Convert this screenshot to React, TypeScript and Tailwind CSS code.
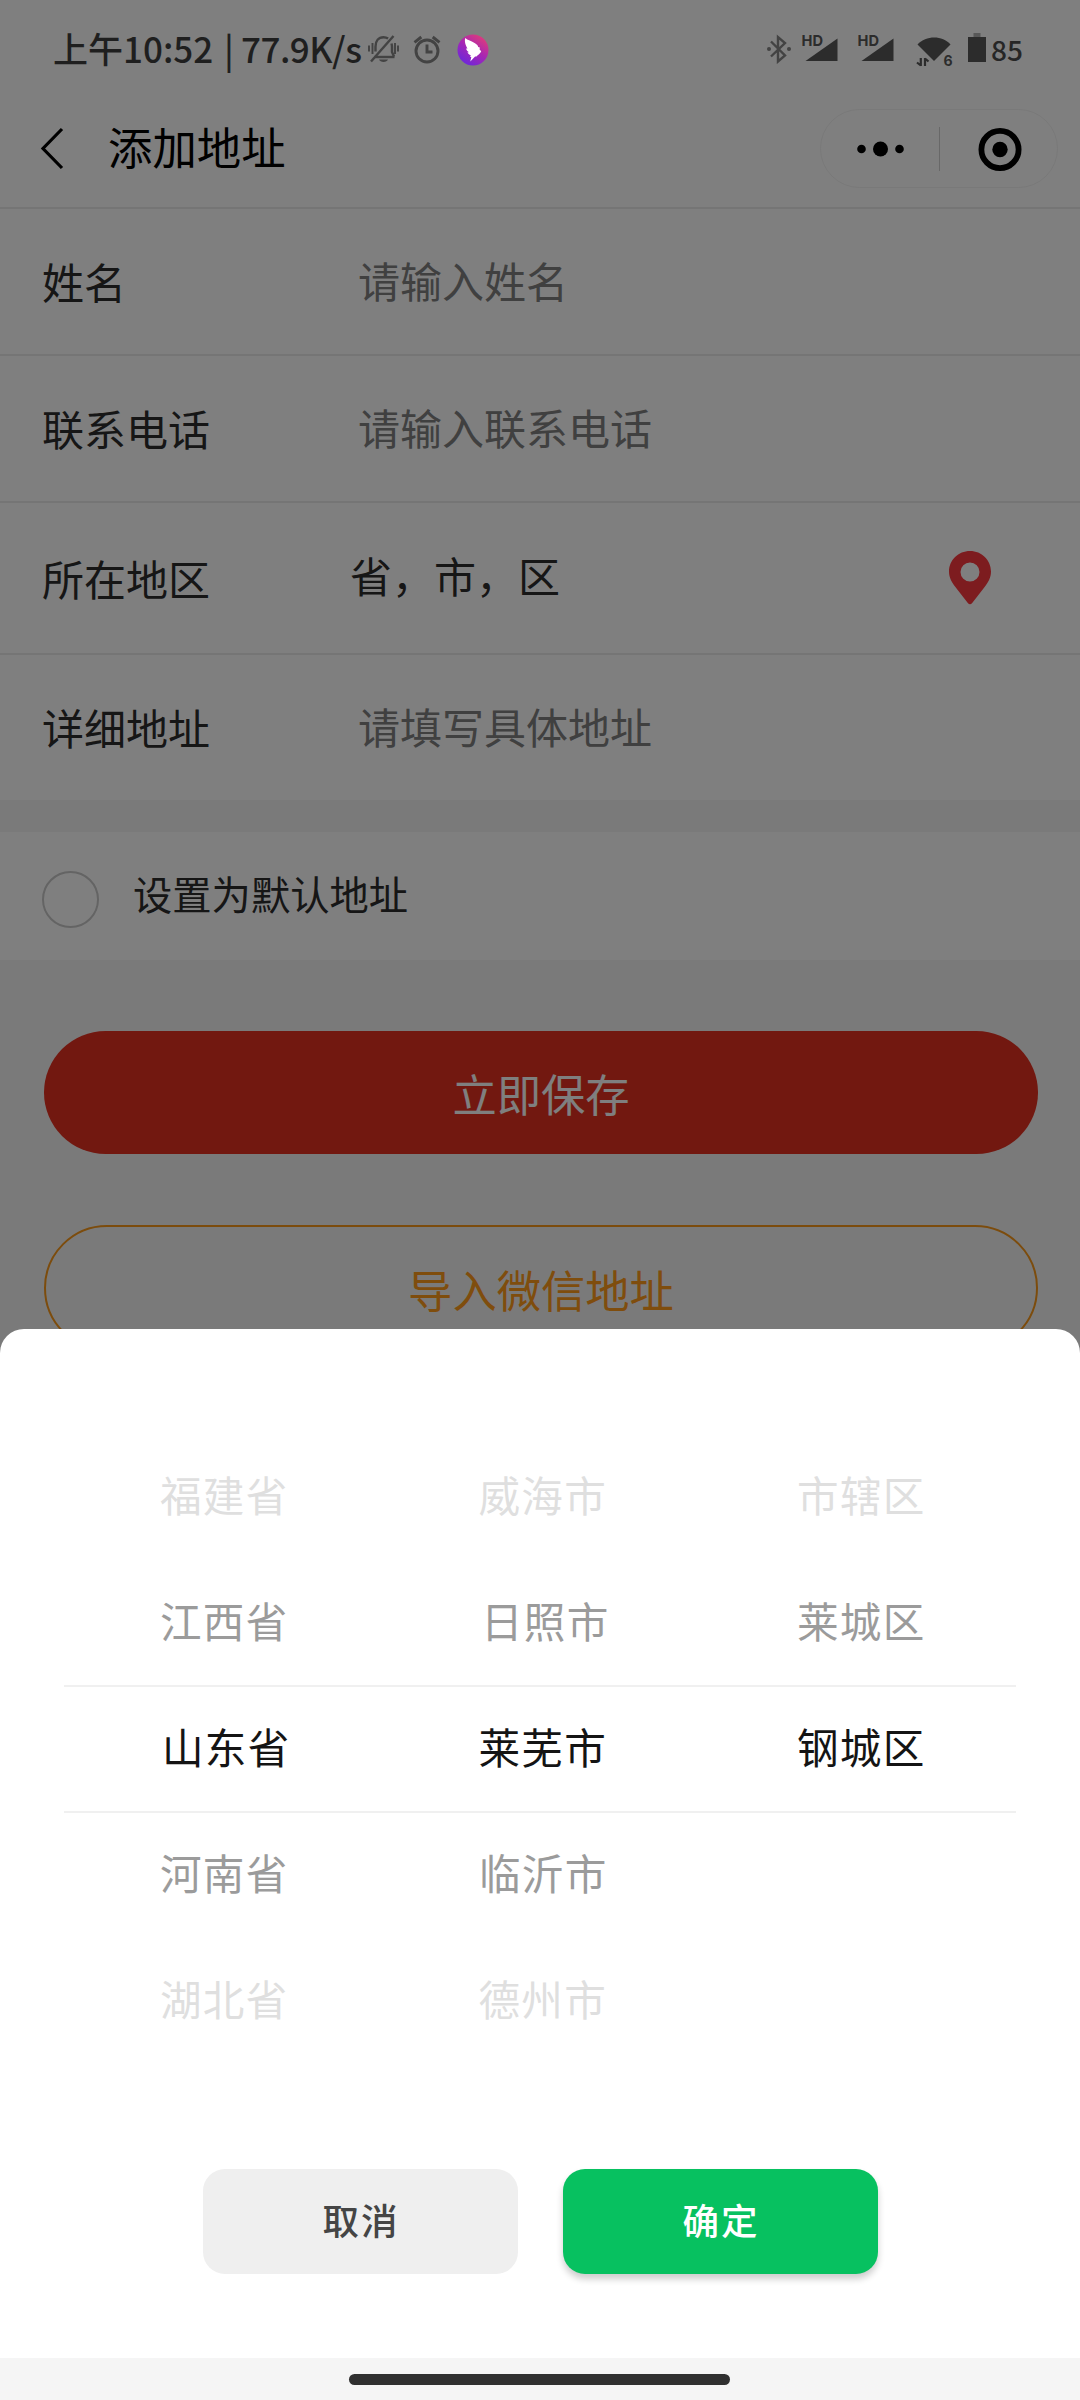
import { FC } from "react";
import clsx from "clsx";

interface FormRowProps {
  label: string;
  value: string;
  className?: string;
  valueClass?: string;
  hasPin?: boolean;
}

interface PickerItem {
  name: string;
  shift?: string;
}

const provinces: PickerItem[] = [
  { name: "福建省" },
  { name: "江西省" },
  { name: "山东省", shift: "pl-1" },
  { name: "河南省" },
  { name: "湖北省" },
];

const cities: PickerItem[] = [
  { name: "威海市" },
  { name: "日照市", shift: "pl-[5px]" },
  { name: "莱芜市" },
  { name: "临沂市", shift: "pl-px" },
  { name: "德州市" },
];

const districts: PickerItem[] = [
  { name: "市辖区" },
  { name: "莱城区" },
  { name: "钢城区" },
];

const itemColors = [
  "text-[#dfdfdf]",
  "text-[#9b9b9b]",
  "text-[#141414]",
  "text-[#9b9b9b]",
  "text-[#dfdfdf]",
];

const MutedBellIcon = () => (
  <svg width="32" height="30" viewBox="0 0 32 30" fill="none" stroke="#434343" strokeWidth="2.400">
    <path d="M7.500 23H27.500" />
    <path d="M8.500 17.500V12.500C8.500 7 11.500 3.200 16.500 3.200c1.800 0 3.300.5 4.600 1.400M24.500 9.500c.3 1 .5 2 .5 3.500V18l2 4.500" />
    <path d="M4 27.500 26.500 2" />
    <path d="M2 11.500v6M5.500 9v11M28 9v11M31 11.500v6" strokeWidth="1.900" />
    <path d="M12 25.500h9c-1 3.200-8 3.200-9 0z" fill="#434343" stroke="none" />
  </svg>
);

const AlarmIcon = () => (
  <svg width="28" height="30" viewBox="0 0 28 30" fill="none" stroke="#434343" strokeWidth="2.900">
    <circle cx="14" cy="17" r="11" />
    <path d="M14 10.500V18h5.500" />
    <path d="M1.500 8.400 8.300 3M26.500 8.400 19.700 3" />
  </svg>
);

const DingIcon = () => (
  <svg width="32" height="32" viewBox="0 0 32 32">
    <defs>
      <linearGradient id="ding" x1="0.8" y1="0.1" x2="0.25" y2="0.9">
        <stop offset="0" stopColor="#d93a80" />
        <stop offset="0.5" stopColor="#a626b4" />
        <stop offset="1" stopColor="#7327d6" />
      </linearGradient>
    </defs>
    <circle cx="16" cy="16" r="15.500" fill="url(#ding)" />
    <path
      fill="#fff"
      d="M8.200 4c2.400 2 6.300 3.200 9.800 5.300 2 1.200 3 2.400 3.200 3.700l1.600.6-.2 1.900 1.600 1.700c-.8 1.900-2 3.100-3.500 4l-1.200 1.300h-1.400L13.300 27.500l1-4.500-1.300-.2.800-1.600c-1.700-.5-2.800-1.500-3.300-2.900l1.500-.1c-1.500-1-2.500-2.200-2.900-3.800l1.400.1C8.800 11.800 7.200 8 8.200 4z"
    />
  </svg>
);

const BluetoothIcon = () => (
  <svg width="26" height="30" viewBox="0 0 26 30" fill="none" stroke="#434343" strokeWidth="2.400">
    <path d="M5 7.500 19 21.500l-7 6V3l7 6L5 22.500" />
    <circle cx="3" cy="15" r="2" fill="#434343" stroke="none" />
    <circle cx="23" cy="15" r="2" fill="#434343" stroke="none" />
  </svg>
);

const SignalIcon = () => (
  <svg className="-mt-2" width="38" height="38" viewBox="0 -8 38 38" fill="#2c2c2c">
    <path d="M4.500 27 36.500 4.500V27z" />
    <path d="M0 0h22.500v10.500L17 13.500H0z" fill="#808080" />
    <text x="0.500" y="12" fontSize="15" fontWeight="700" fontFamily="Inter, sans-serif" textLength="21.500" lengthAdjust="spacingAndGlyphs">
      HD
    </text>
  </svg>
);

const WifiIcon = () => (
  <svg width="42" height="38" viewBox="0 0 42 38" fill="#2c2c2c">
    <path d="M2.500 9.500C11 .2 27.500.2 35.500 9.500L19 26z" />
    <path d="M5.800 23v8M2 27.500l3.800 3M10 31v-8M13.500 26.500l-3.500-3" fill="none" stroke="#2c2c2c" strokeWidth="2.200" />
    <text x="28.500" y="31" fontSize="14" fontWeight="700" fontFamily="Inter, sans-serif">
      6
    </text>
  </svg>
);

const BatteryIcon = () => (
  <svg width="18" height="30" viewBox="0 0 18 30">
    <path d="M5.500 0h7v4h-7z" fill="#585858" />
    <path d="M0 4h18v25H0z" fill="#2c2c2c" />
  </svg>
);

const PinIcon = () => (
  <svg width="42" height="54" viewBox="0 0 42 54">
    <path
      fill="#fa383e"
      fillRule="evenodd"
      d="M21 0c11.700 0 21 9.200 21 20.500 0 6-2.500 10-6 15L23 52.300c-1.200 1.300-2.800 1.300-4 0L6 35.500c-3.500-5-6-9-6-15C0 9.200 9.300 0 21 0zm0 11.500a9.500 9.500 0 1 0 0 19 9.500 9.500 0 0 0 0-19z"
    />
  </svg>
);

const StatusBar = () => (
  <div className="relative z-20 flex h-[98px] items-start justify-between pl-[53px] pr-[55px]">
    <div className="flex items-start">
      <div className="mt-[21px] flex w-[314px] whitespace-nowrap text-[35px] font-medium leading-[54px] text-[#1f1f1f]">
        <span className="w-[171px]">上午10:52</span>
        <span className="w-[17px]">|</span>
        <span className="tracking-[-0.500px]">77.9K/s</span>
      </div>
      <div className="mt-[34px] flex items-start">
        <MutedBellIcon />
        <div className="ml-[14px]">
          <AlarmIcon />
        </div>
        <div className="ml-4">
          <DingIcon />
        </div>
      </div>
    </div>
    <div className="mt-[34px] flex items-start">
      <BluetoothIcon />
      <div className="ml-[9px]">
        <SignalIcon />
      </div>
      <div className="ml-[18px]">
        <SignalIcon />
      </div>
      <div className="ml-5 mt-px">
        <WifiIcon />
      </div>
      <div className="ml-[11px] -mt-px">
        <BatteryIcon />
      </div>
      <span className="-mt-px ml-[5px] w-[34px] text-[28px] font-medium leading-8 text-[#262626]">85</span>
    </div>
  </div>
);

const NavBar = () => (
  <div className="flex h-[111px] items-start justify-between border-b-2 border-[#ebebeb] pl-[40px] pr-[22px]">
    <div className="flex items-start">
      <svg className="mt-[29px]" width="24" height="44" viewBox="0 0 24 44" fill="none" stroke="#000" strokeWidth="3.200">
        <path d="M22 2 3 21.500 22 41" />
      </svg>
      <h1 className="ml-11 mt-4 text-[44.400px] leading-[64px] text-black">添加地址</h1>
    </div>
    <div className="mt-[11px] flex h-[79px] w-[238px] items-center rounded-full border border-[#f2f2f2]">
      <svg className="ml-9" width="48" height="16" viewBox="0 0 48 16">
        <circle cx="4.500" cy="8" r="4.300" />
        <circle cx="23.500" cy="8" r="7.500" />
        <circle cx="42.500" cy="8" r="4.300" />
      </svg>
      <div className="ml-[34px] h-11 w-px bg-[#d0d0d0]" />
      <svg className="ml-[38px]" width="44" height="44" viewBox="0 0 44 44">
        <circle cx="22" cy="22.500" r="18.600" fill="none" stroke="#000" strokeWidth="5.800" />
        <circle cx="22" cy="22.500" r="7.700" />
      </svg>
    </div>
  </div>
);

const FormRow: FC<FormRowProps> = ({ label, value, className = "", valueClass = "", hasPin }) => (
  <div className={clsx("flex items-center pl-[42px] text-[42px] leading-[60px]", className)}>
    <span className="w-[316px] pb-px text-[#2d2d2d]">{label}</span>
    <span className={clsx("flex-1", valueClass)}>{value}</span>
    {hasPin && (
      <div className="pr-[89px]">
        <PinIcon />
      </div>
    )}
  </div>
);

const PickerColumn: FC<{ items: PickerItem[] }> = ({ items }) => (
  <div className="w-[318.500px]">
    {items.map((item, i) => (
      <div
        key={item.name}
        className={clsx(
          "flex h-[126px] items-center justify-center pb-[6px] text-[41.600px] tracking-[1.300px]",
          itemColors[i],
          item.shift
        )}
      >
        {item.name}
      </div>
    ))}
  </div>
);

const AddressForm = () => (
  <div className="h-[2302px] bg-[#f5f5f5]">
    <div className="bg-white">
      <NavBar />
      <FormRow label="姓名" value="请输入姓名" className="h-[147px] border-b-2 border-[#ebebeb]" valueClass="text-[#808080] pb-[3px]" />
      <FormRow label="联系电话" value="请输入联系电话" className="h-[147px] border-b-2 border-[#ebebeb]" valueClass="text-[#808080] pb-[3px]" />
      <FormRow
        label="所在地区"
        value="省，市，区"
        className="h-[152px] border-b-2 border-[#ebebeb]"
        valueClass="text-[#2d2d2d] -ml-2 pb-[6px]"
        hasPin
      />
      <FormRow label="详细地址" value="请填写具体地址" className="h-[145px]" valueClass="text-[#808080] pb-[3px]" />
    </div>
    <div className="mt-8 flex h-32 items-center bg-white pl-[42px]">
      <div className="mt-[6px] h-[57px] w-[57px] rounded-full border-2 border-[#c8c8c8]" />
      <span className="ml-[34px] pb-[5px] text-[39.300px] text-[#2d2d2d]">设置为默认地址</span>
    </div>
    <div className="flex flex-col gap-[71px] pl-11 pt-[71px]">
      <button className="h-[123px] w-[994px] rounded-full bg-[#e43020] pt-[2px] text-[44.300px] text-[#fff]">立即保存</button>
      <button className="h-[126px] w-[994px] rounded-full border-2 border-[#f8981a] pt-[2px] text-[44.300px] text-[#ff9a1a]">
        导入微信地址
      </button>
    </div>
  </div>
);

const RegionPicker = () => (
  <div className="absolute inset-x-0 bottom-0 z-30 flex h-[1071px] flex-col rounded-t-[24px] bg-white">
    <div className="relative mt-[105px] flex pl-[65px]">
      <PickerColumn items={provinces} />
      <PickerColumn items={cities} />
      <PickerColumn items={districts} />
      <div className="absolute left-16 top-[251px] h-32 w-[952px] border-y-2 border-[#f0f0f0]" />
    </div>
    <div className="mt-[105px] flex justify-center gap-[45px] text-[36.500px] font-medium tracking-[2px]">
      <button className="h-[105px] w-[315px] rounded-[22px] bg-[#efefef] pb-[2px] pl-[2px] text-[#454545]">取消</button>
      <button className="h-[105px] w-[315px] rounded-[22px] bg-[#07c160] pb-[2px] pl-[2px] text-white shadow-[0_5px_7px_rgba(0,0,0,0.2)]">
        确定
      </button>
    </div>
    <div className="mt-auto flex h-[42px] bg-[#f5f5f5] pl-[349px] pt-4">
      <div className="h-[11px] w-[381px] rounded-full bg-[#303030]" />
    </div>
  </div>
);

const App: FC = () => {
  return (
    <div className="relative h-[2400px] w-[1080px] overflow-hidden bg-white font-['Noto_Sans_CJK_SC',sans-serif]">
      <StatusBar />
      <AddressForm />
      <div className="absolute inset-0 z-10 bg-black/50" />
      <RegionPicker />
    </div>
  );
};

export default App;
